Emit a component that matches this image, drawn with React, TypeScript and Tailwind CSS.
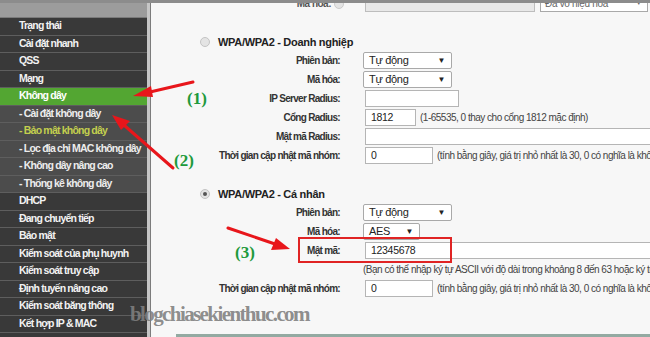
import React from 'react'

type NavItem = { label: string; kind: 'main' | 'sub' | 'active' | 'current' }

const navItems: NavItem[] = [
  { label: 'Trạng thái', kind: 'main' },
  { label: 'Cài đặt nhanh', kind: 'main' },
  { label: 'QSS', kind: 'main' },
  { label: 'Mạng', kind: 'main' },
  { label: 'Không dây', kind: 'active' },
  { label: '- Cài đặt không dây', kind: 'sub' },
  { label: '- Bảo mật không dây', kind: 'current' },
  { label: '- Lọc địa chỉ MAC không dây', kind: 'sub' },
  { label: '- Không dây nâng cao', kind: 'sub' },
  { label: '- Thống kê không dây', kind: 'sub' },
  { label: 'DHCP', kind: 'main' },
  { label: 'Đang chuyển tiếp', kind: 'main' },
  { label: 'Bảo mật', kind: 'main' },
  { label: 'Kiểm soát của phụ huynh', kind: 'main' },
  { label: 'Kiểm soát truy cập', kind: 'main' },
  { label: 'Định tuyến nâng cao', kind: 'main' },
  { label: 'Kiểm soát băng thông', kind: 'main' },
  { label: 'Kết hợp IP & MAC', kind: 'main' },
]

const itemClass: Record<NavItem['kind'], string> = {
  main: 'bg-[#393939] text-[#f2f2f2]',
  sub: 'bg-[#4c4c4c] text-[#ececec]',
  active: 'bg-[#53a632] text-white',
  current: 'bg-[#4c4c4c] text-[#c3cf4e]',
}

const Sidebar = () => (
  <div className="w-[147px] flex flex-col bg-[#393939] shrink-0">
    <div className="h-[15px] bg-[#9c9c9c] border-b border-[#7a7a7a]" />
    {navItems.map((it) => (
      <div
        key={it.label}
        className={`h-[17.5px] flex items-center pl-[19px] text-[10.5px] font-bold tracking-[-0.8px] whitespace-nowrap border-b border-[#5e5e5e] ${itemClass[it.kind]}`}
      >
        {it.label}
      </div>
    ))}
  </div>
)

const Select = ({ value, width }: { value: string; width: string }) => (
  <div
    className={`${width} h-[17px] bg-white border border-[#a9a9a9] rounded-[2px] flex items-center justify-between pl-[5px] pr-[6px] text-[11px] tracking-[-0.3px] text-[#222]`}
  >
    <span>{value}</span>
    <span className="text-[8px] text-[#222]">▼</span>
  </div>
)

const Input = ({ value = '', width }: { value?: string; width: string }) => (
  <div
    className={`${width} ml-[2px] h-[17px] bg-white border border-[#b5b5b5] flex items-center pl-[5px] text-[10.5px] tracking-[-0.3px] text-[#222] shrink-0`}
  >
    {value}
  </div>
)

const Row = ({ label, children }: { label: string; children?: React.ReactNode }) => (
  <div className="h-[19px] flex items-center">
    <div className="w-[189px] shrink-0 text-right text-[10px] font-bold tracking-[-0.7px] text-[#333] whitespace-nowrap">
      {label}
    </div>
    <div className="ml-[23px] flex items-center gap-[4px] whitespace-nowrap">{children}</div>
  </div>
)

const Help = ({ children }: { children: React.ReactNode }) => (
  <span className="text-[10px] tracking-[-0.5px] text-[#444] whitespace-nowrap">{children}</span>
)

const Radio = ({ checked }: { checked?: boolean }) => (
  <span className="w-[10px] h-[10px] rounded-full border border-[#c4c4c4] bg-[#e4e4e4] flex items-center justify-center shrink-0">
    {checked && <span className="w-[4px] h-[4px] rounded-full bg-[#555]" />}
  </span>
)

const SectionTitle = ({ title, checked }: { title: string; checked?: boolean }) => (
  <div className="h-[18px] flex items-center pl-[49px] gap-[8px]">
    <Radio checked={checked} />
    <span className="text-[11px] font-bold tracking-[-0.3px] text-[#222]">{title}</span>
  </div>
)

const Content = () => (
  <div className="flex-1 flex flex-col overflow-hidden bg-[#f7f7f7]">
    <div className="h-[9px] flex items-end overflow-hidden">
      <div className="flex items-center h-[17px] w-full">
        <div className="w-[180px] text-right text-[10px] font-bold tracking-[-0.5px] text-[#555]">Mã hóa:</div>
        <span className="ml-[3px] w-[10px] h-[10px] rounded-full border border-[#ccc] bg-[#e4e4e4]" />
        <div className="ml-[21px] w-[170px] h-[17px] bg-[#e8e8e8] border border-[#bdbdbd]" />
        <div className="ml-[5px] w-[108px] h-[17px] bg-white border border-[#a9a9a9] flex items-center justify-between pl-[4px] pr-[5px] text-[10px] tracking-[-0.3px] text-[#666]">
          <span>Đã vô hiệu hóa</span>
          <span className="text-[7px]">▼</span>
        </div>
      </div>
    </div>

    <div className="mt-[21px]">
      <SectionTitle title="WPA/WPA2 - Doanh nghiệp" />
    </div>
    <Row label="Phiên bản:">
      <Select value="Tự động" width="w-[89px]" />
    </Row>
    <Row label="Mã hóa:">
      <Select value="Tự động" width="w-[89px]" />
    </Row>
    <Row label="IP Server Radius:">
      <Input width="w-[94px]" />
    </Row>
    <Row label="Cổng Radius:">
      <Input value="1812" width="w-[51px]" />
      <Help>(1-65535, 0 thay cho cổng 1812 mặc định)</Help>
    </Row>
    <Row label="Mật mã Radius:">
      <Input width="w-[320px]" />
    </Row>
    <Row label="Thời gian cập nhật mã nhóm:">
      <Input value="0" width="w-[68px]" />
      <Help>(tính bằng giây, giá trị nhỏ nhất là 30, 0 có nghĩa là không cập nhật)</Help>
    </Row>

    <div className="mt-[20px]">
      <SectionTitle title="WPA/WPA2 - Cá nhân" checked />
    </div>
    <Row label="Phiên bản:">
      <Select value="Tự động" width="w-[89px]" />
    </Row>
    <Row label="Mã hóa:">
      <Select value="AES" width="w-[57px]" />
    </Row>
    <Row label="Mật mã:">
      <Input value="12345678" width="w-[320px]" />
    </Row>
    <div className="h-[19px] flex items-center pl-[212px]">
      <Help>(Bạn có thể nhập ký tự ASCII với độ dài trong khoảng 8 đến 63 hoặc ký tự Hexadecimal)</Help>
    </div>
    <Row label="Thời gian cập nhật mã nhóm:">
      <Input value="0" width="w-[68px]" />
      <Help>(tính bằng giây, giá trị nhỏ nhất là 30, 0 có nghĩa là không cập nhật)</Help>
    </Row>

    <div className="flex-1" />
    <div className="h-[3px] ml-[25px] bg-[#93aaa2]" />
  </div>
)

const Annotations = () => (
  <>
    <svg className="absolute inset-0 pointer-events-none" width="650" height="337" viewBox="0 0 650 337">
      <g stroke="#e8161b" strokeWidth="3" strokeLinecap="round" fill="#e8161b">
        <line x1="193" y1="82" x2="150" y2="92" />
        <polygon points="133,96 151,86 153,97" stroke="none" />
        <line x1="173" y1="168" x2="125" y2="126" />
        <polygon points="112,115 130,121 121,130" stroke="none" />
        <line x1="228" y1="228" x2="275" y2="244" />
        <polygon points="290,249 271,250 276,238" stroke="none" />
      </g>
    </svg>
    <div className="absolute left-[298px] top-[237px] w-[154px] h-[26px] border-2 border-[#e02424]" />
    <span className="absolute left-[187px] top-[86px] text-[17px] font-bold text-[#1e9a3c] [font-family:'Liberation_Serif',serif]">(1)</span>
    <span className="absolute left-[174px] top-[148px] text-[17px] font-bold text-[#1e9a3c] [font-family:'Liberation_Serif',serif]">(2)</span>
    <span className="absolute left-[235px] top-[240px] text-[17px] font-bold text-[#1e9a3c] [font-family:'Liberation_Serif',serif]">(3)</span>
    <span className="absolute left-[130px] top-[299px] text-[21px] font-bold text-[#7f7f7f]/90 tracking-[-1.6px] [font-family:'Liberation_Serif',serif]">
      blogchiasekienthuc.com
    </span>
  </>
)

export default function App() {
  return (
    <div className="relative w-[650px] h-[337px] overflow-hidden flex flex-col bg-[#f7f7f7] [font-family:'Liberation_Sans',Arial,sans-serif]">
      <div className="h-[3px] bg-[#8c8c8c] shrink-0" />
      <div className="flex flex-1 min-h-0">
        <Sidebar />
        <div className="w-[3px] bg-[#c6c6c6] shrink-0" />
        <div className="w-[1px] bg-[#7c7c7c] shrink-0" />
        <Content />
      </div>
      <Annotations />
    </div>
  )
}
